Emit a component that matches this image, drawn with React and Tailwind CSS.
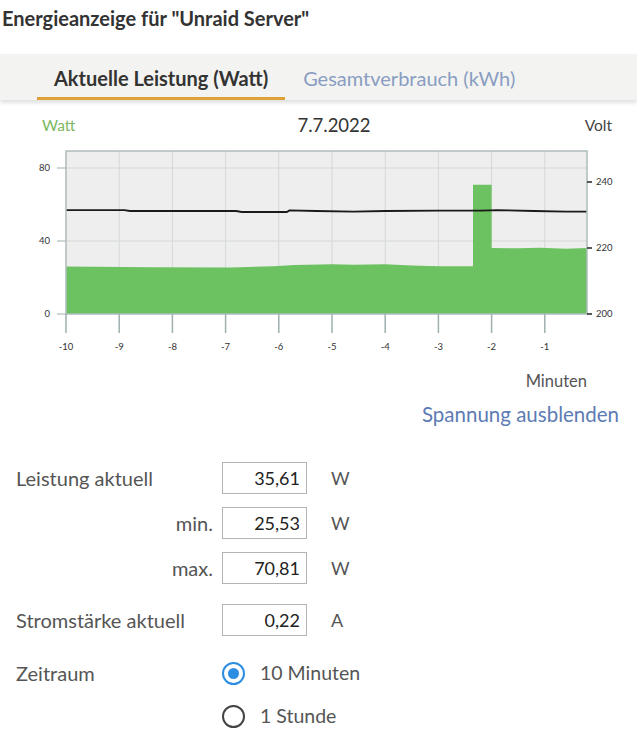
import React from "react";

const FONT = { fontFamily: "Lato, 'Noto Sans', sans-serif" };

// plot geometry in svg coordinates
const X0 = 66;
const X1 = 587;
const PX_PER_MIN = 53.2;
const YB = 173;
const xt = (t) => X0 + (t + 10) * PX_PER_MIN;
const yw = (w) => YB - w * 1.825;
const yv = (v) => YB - (v - 200) * 3.3;

const power = [
  [-10, 26], [-8.4, 25.6], [-6.9, 25.4], [-6.1, 26.2], [-5.7, 26.8], [-5.0, 27.3],
  [-4.6, 27.0], [-4.0, 27.3], [-3.5, 26.6], [-3.0, 26.2], [-2.35, 26.2],
  [-2.35, 70.8], [-2.0, 70.8], [-2.0, 36.2], [-1.5, 36.0], [-1.1, 36.3], [-0.6, 35.8], [-0.2, 36.2],
];

const volts = [
  [-10, 231.5], [-8.9, 231.5], [-8.8, 231.2], [-6.8, 231.2], [-6.7, 230.9], [-5.85, 230.9],
  [-5.8, 231.4], [-5.3, 231.2], [-4.6, 231.0], [-4.0, 231.2], [-3.0, 231.3], [-2.2, 231.3],
  [-1.9, 231.5], [-1.2, 231.2], [-0.6, 231.0], [-0.2, 231.0],
];

function Chart() {
  const area =
    `M${X0},${YB} ` +
    power.map(([t, w]) => `L${Math.min(xt(t), X1).toFixed(1)},${yw(w).toFixed(1)}`).join(" ") +
    ` L${X1},${YB} Z`;
  const line = volts
    .map(([t, v], i) => `${i ? "L" : "M"}${Math.min(xt(t), X1).toFixed(1)},${yv(v).toFixed(1)}`)
    .join(" ");
  const ticks = [-10, -9, -8, -7, -6, -5, -4, -3, -2, -1];
  return (
    <svg width="637" height="220" viewBox="0 0 637 220" className="block">
      <rect x={X0} y="10" width={X1 - X0} height={YB - 10} fill="#eeeeee" />
      {ticks.slice(1).map((t) => (
        <line key={t} x1={xt(t)} x2={xt(t)} y1="10" y2={YB} stroke="#d4d8d8" strokeWidth="1" />
      ))}
      {[40, 80].map((w) => (
        <line key={w} x1={X0} x2={X1} y1={yw(w)} y2={yw(w)} stroke="#d4d8d8" strokeWidth="1" />
      ))}
      <path d={area} fill="#6cc160" />
      <path d={line} fill="none" stroke="#1a1a1a" strokeWidth="1.8" />
      <rect x={X0} y="10" width={X1 - X0} height={YB - 10} fill="none" stroke="#aebcbc" strokeWidth="1.5" />
      {ticks.map((t) => (
        <g key={t}>
          <line x1={xt(t)} x2={xt(t)} y1={YB} y2={YB + 19} stroke="#9fb0b0" strokeWidth="1.5" />
          <text x={xt(t)} y={YB + 36} fontSize="9.5" fill="#333" textAnchor="middle" style={FONT}>
            {t}
          </text>
        </g>
      ))}
      {[0, 40, 80].map((w) => (
        <g key={w}>
          <line x1={X0 - 9} x2={X0} y1={yw(w)} y2={yw(w)} stroke="#9fb0b0" strokeWidth="1" />
          <text x={X0 - 16} y={yw(w) + 3} fontSize="9.5" fill="#333" textAnchor="end" style={FONT}>
            {w}
          </text>
        </g>
      ))}
      {[200, 220, 240].map((v) => (
        <g key={v}>
          <line x1={X1} x2={X1 + 5} y1={yv(v)} y2={yv(v)} stroke="#222" strokeWidth="1.5" />
          <text x={X1 + 9} y={yv(v) + 3} fontSize="9.5" fill="#333" style={FONT}>
            {v}
          </text>
        </g>
      ))}
    </svg>
  );
}

function ValueRow({ label, right, value, unit, className = "" }) {
  return (
    <div className={`flex h-[32px] items-center ${className}`}>
      <div className={`w-[213px] pl-4 text-[20px] leading-[28px] text-[#555] ${right ? "text-right" : ""}`}>
        {label}
      </div>
      <div className="ml-[9px] flex h-[32px] w-[85px] items-center justify-end border border-[#b4b4b4] bg-white pr-[6px] text-[18px] text-[#222]">
        {value}
      </div>
      <div className="ml-[24px] text-[18px] text-[#555]">{unit}</div>
    </div>
  );
}

function Radio({ checked, label }) {
  return (
    <div className="flex items-center">
      <div
        className={`flex h-[23px] w-[23px] items-center justify-center rounded-full border-[2.5px] ${
          checked ? "border-[#2c8ee3]" : "border-[#444]"
        }`}
      >
        {checked && <div className="h-[11px] w-[11px] rounded-full bg-[#2c8ee3]" />}
      </div>
      <span className="ml-[15px] text-[19.5px] leading-[28px] text-[#555]">{label}</span>
    </div>
  );
}

export default function App() {
  return (
    <div className="h-[750px] w-[637px] overflow-hidden bg-white" style={FONT}>
      <div className="flex h-[36px] items-center pl-[2px] text-[20px] font-bold text-[#333]">
        Energieanzeige für "Unraid Server"
      </div>

      <div className="mt-[18px] flex h-[46px] items-end bg-[#f3f3f1] pl-[37px] shadow-[0_3px_4px_rgba(0,0,0,0.12)]">
        <div className="flex h-full flex-col justify-end">
          <div className="px-[17px] pb-[5px] text-[20px] font-bold leading-[28px] text-[#333]">
            Aktuelle Leistung (Watt)
          </div>
          <div className="h-[3px] bg-[#e0a236]" />
        </div>
        <div className="px-[18px] pb-[8px] text-[20px] leading-[28px] text-[#8a9dc2]">Gesamtverbrauch (kWh)</div>
      </div>

      <div className="mt-[16px] flex h-[20px] items-center justify-between pl-[42px] pr-[25px]">
        <span className="text-[15.5px] text-[#7cb860]">Watt</span>
        <span className="ml-[8px] text-[18.5px] text-[#333]">7.7.2022</span>
        <span className="text-[15.5px] text-[#444]">Volt</span>
      </div>

      <div className="mt-[5px]">
        <Chart />
      </div>

      <div className="mt-[8px] flex justify-end pr-[50px] text-[16.5px] leading-[24px] text-[#555]">Minuten</div>
      <div className="mt-[7px] flex justify-end pr-[18px] text-[20.5px] leading-[28px] text-[#5d7bb4]">
        Spannung ausblenden
      </div>

      <div className="mt-[34px]">
        <ValueRow label="Leistung aktuell" value="35,61" unit="W" />
        <ValueRow label="min." right value="25,53" unit="W" className="mt-[13px]" />
        <ValueRow label="max." right value="70,81" unit="W" className="mt-[13px]" />
        <ValueRow label="Stromstärke aktuell" value="0,22" unit="A" className="mt-[20px]" />
        <div className="mt-[21px] flex h-[32px] items-center">
          <div className="w-[222px] pl-4 text-[20px] leading-[28px] text-[#555]">Zeitraum</div>
          <Radio checked label="10 Minuten" />
        </div>
        <div className="mt-[11px] flex h-[32px] items-center">
          <div className="w-[222px]" />
          <Radio label="1 Stunde" />
        </div>
      </div>
    </div>
  );
}
